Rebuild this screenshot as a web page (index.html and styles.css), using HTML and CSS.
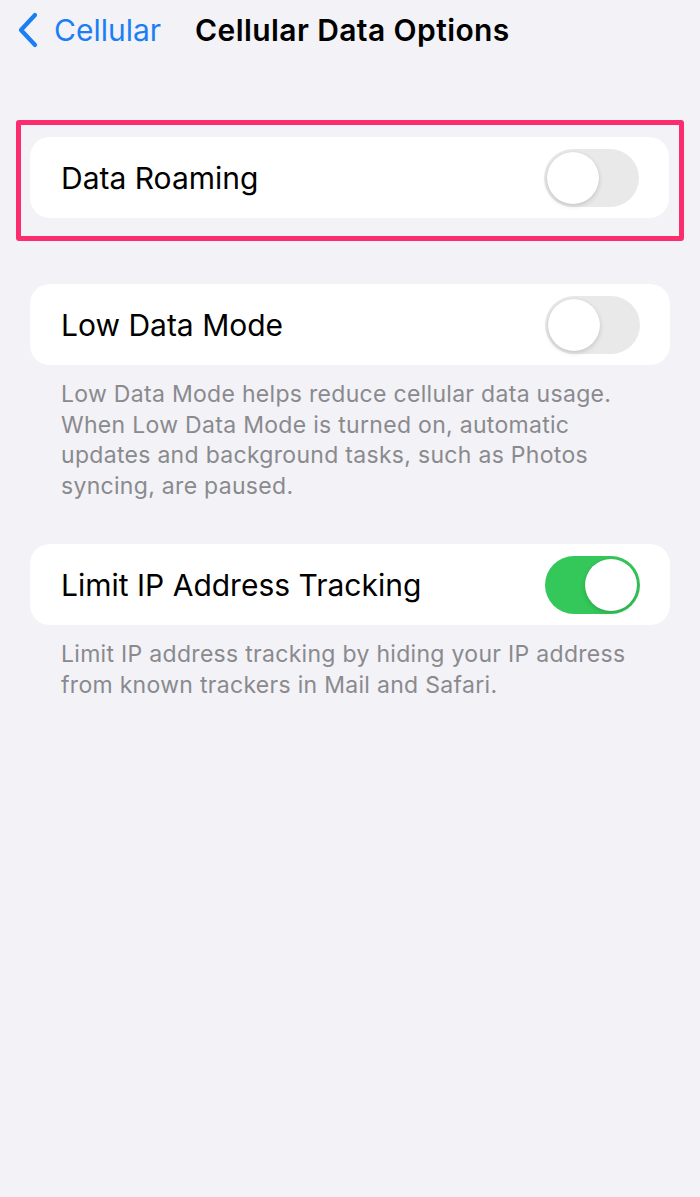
FILE: index.html
```html
<!DOCTYPE html>
<html lang="en">
<head>
    <meta charset="UTF-8">
    <meta name="viewport" content="width=device-width, initial-scale=1.0">
    <title>Cellular Data Options</title>
    <link rel="stylesheet" href="styles.css">
</head>
<body>
    <div class="nav-bar">
        <a href="#" class="back">
            <svg class="chevron" width="22" height="36" viewBox="0 0 22 36">
                <path d="M18 3 L4 18 L18 33" fill="none" stroke="#1a7ff5" stroke-width="4.2" stroke-linecap="round" stroke-linejoin="round"/>
            </svg>
            <span>Cellular</span>
        </a>
        <h1 class="title">Cellular Data Options</h1>
    </div>

    <div class="content">
        <div class="highlight">
            <div class="card">
                <span class="label">Data Roaming</span>
                <span class="toggle"><span class="knob"></span></span>
            </div>
        </div>

        <div class="group">
            <div class="card">
                <span class="label">Low Data Mode</span>
                <span class="toggle"><span class="knob"></span></span>
            </div>
            <p class="footnote">Low Data Mode helps reduce cellular data usage. When Low Data Mode is turned on, automatic updates and background tasks, such as Photos syncing, are paused.</p>
        </div>

        <div class="group">
            <div class="card">
                <span class="label">Limit IP Address Tracking</span>
                <span class="toggle on"><span class="knob"></span></span>
            </div>
            <p class="footnote">Limit IP address tracking by hiding your IP address from known trackers in Mail and Safari.</p>
        </div>
    </div>
</body>
</html>
```

FILE: styles.css
```css
body {
    font-family: Inter, "Noto Sans", sans-serif;
    margin: 0;
    padding: 0;
    background-color: #f2f2f7;
    color: #000;
    height: 1197px;
}
.nav-bar {
    display: flex;
    align-items: center;
    height: 60px;
    padding-left: 17px;
}
.back {
    display: flex;
    align-items: center;
    gap: 15px;
    color: #1a7ff5;
    text-decoration: none;
    font-size: 30px;
}
.chevron {
    display: block;
}
.title {
    margin: 0 0 0 34px;
    font-size: 30px;
    font-weight: 600;
    letter-spacing: 0.4px;
}
.content {
    padding: 60px 30px 0 30px;
}
.highlight {
    margin: 0 -14px 0 -14px;
    border: 5px solid #fc2d6e;
    border-radius: 3px;
    padding: 12px 10px 18px 9px;
}
.group {
    margin-top: 43px;
}
.card {
    display: flex;
    align-items: center;
    justify-content: space-between;
    height: 81px;
    padding: 0 30px 0 31px;
    background-color: #fff;
    border-radius: 20px;
}
.label {
    font-size: 30px;
}
.toggle {
    position: relative;
    width: 95px;
    height: 58px;
    border-radius: 29px;
    background-color: #e9e9ea;
}
.knob {
    position: absolute;
    top: 3px;
    left: 3px;
    width: 52px;
    height: 52px;
    border-radius: 50%;
    background-color: #fff;
    box-shadow: 0 2px 5px rgba(0, 0, 0, 0.15), 0 0 1px rgba(0, 0, 0, 0.12);
}
.toggle.on {
    background-color: #34c759;
}
.toggle.on .knob {
    left: 40px;
}
.footnote {
    margin: 14px 0 0 0;
    padding: 0 31px;
    font-size: 23px;
    line-height: 30.5px;
    color: #8a8a8e;
    letter-spacing: 0.3px;
}
```
